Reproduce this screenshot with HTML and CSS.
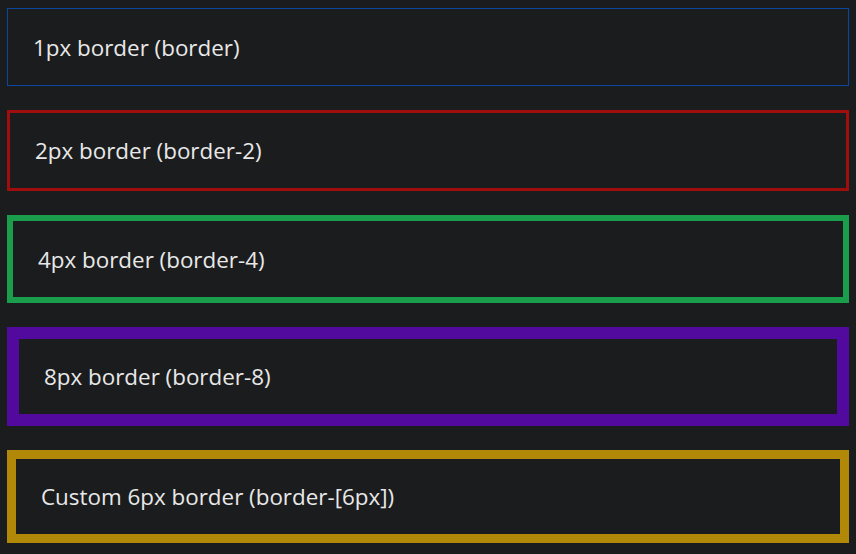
FILE: index.html
```html
<!DOCTYPE html>
<html>
<head>
<meta charset="utf-8">
<link rel="stylesheet" href="styles.css">
</head>
<body>
<div class="stack">
  <div class="box b1">1px border (border)</div>
  <div class="box b2">2px border (border-2)</div>
  <div class="box b4">4px border (border-4)</div>
  <div class="box b8">8px border (border-8)</div>
  <div class="box b6">Custom 6px border (border-[6px])</div>
</div>
</body>
</html>
```

FILE: styles.css
```css
html, body {
  margin: 0;
  padding: 0;
  background: #1b1c1e;
}
body {
  width: 856px;
  height: 554px;
  overflow: hidden;
  font-family: "Open Sans", "Noto Sans", sans-serif;
  color: #e8e8e8;
}
.stack {
  display: flex;
  flex-direction: column;
  gap: 24px;
  padding: 8px 7px;
}
.box {
  display: flex;
  align-items: center;
  height: 75px;
  padding: 0 24px 0 25px;
  font-size: 22.4px;
  border-style: solid;
}
.b1 { border-width: 1px; border-color: #0b47a1; height: 76px; }
.b2 { border-width: 3px; border-color: #a00d0d; }
.b4 { border-width: 6px; border-color: #1b9e4b; height: 76px; }
.b8 { border-width: 12px; border-color: #520a9e; }
.b6 { border-width: 9px; border-color: #b28808; }
```
